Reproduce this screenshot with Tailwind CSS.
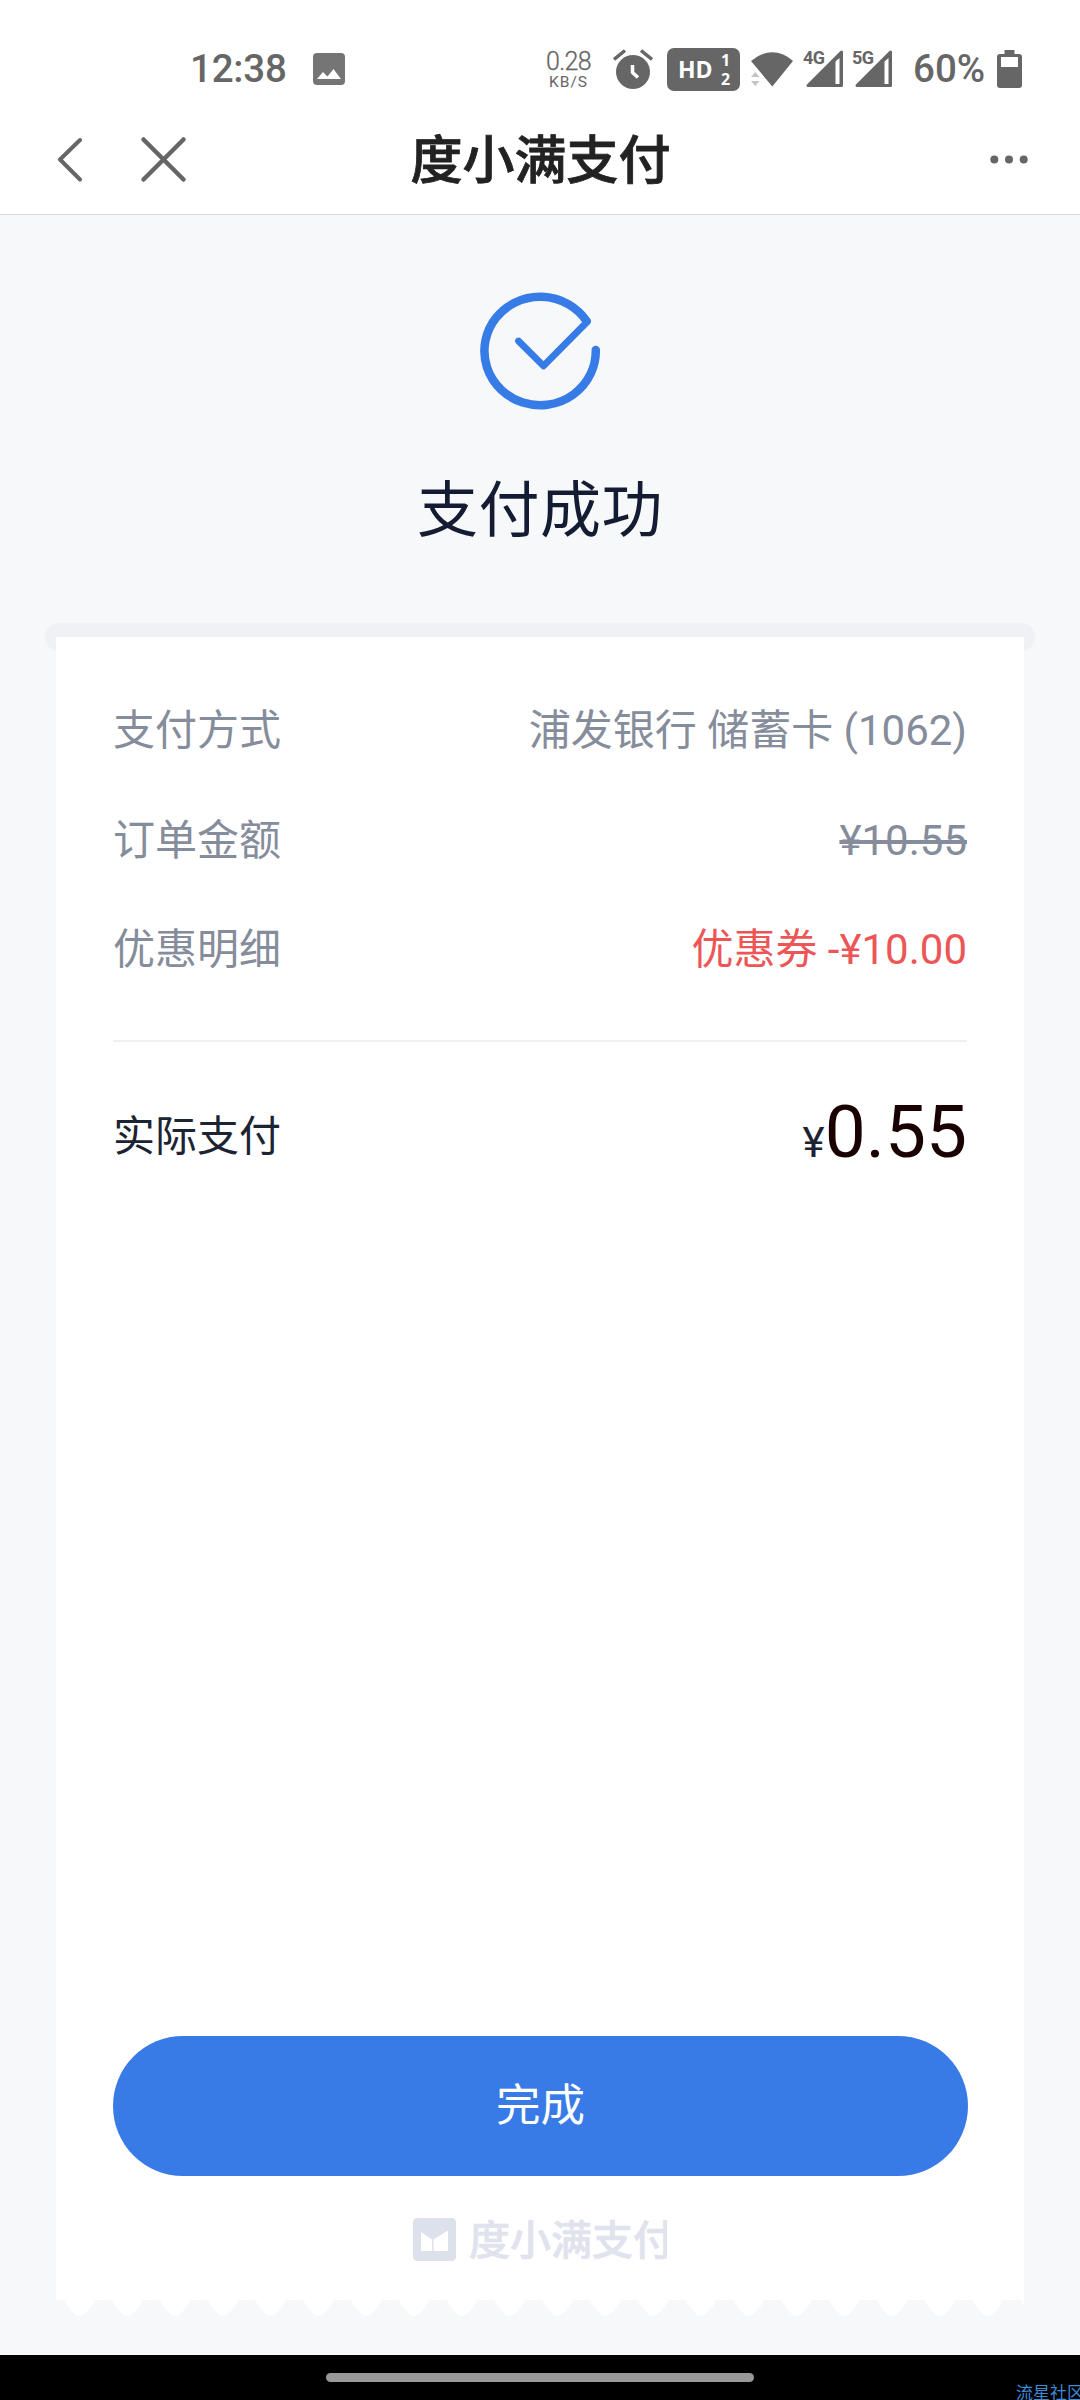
<!DOCTYPE html>
<html lang="zh-CN">
<head>
<meta charset="utf-8">
<meta name="viewport" content="width=1080">
<title>度小满支付</title>
<script src="https://cdn.jsdelivr.net/npm/@tailwindcss/browser@4"></script>
</head>
<body class="w-[1080px] h-[2400px] overflow-hidden flex flex-col bg-[#f6f8fa] font-[Roboto,'Noto_Sans_CJK_SC',sans-serif]">

<header class="h-[215px] shrink-0 flex flex-col bg-white border-b border-[#d9dadb] text-[#666666]">
  <!-- Status bar -->
  <div class="h-[110px] pt-[30px] flex items-start">
    <div class="ml-[190px] w-[123px] h-20 pt-[16px] text-[38.500px] leading-[46px] font-medium tracking-[-0.2px] whitespace-nowrap">12:38</div>
    <svg class="w-8 h-8 mt-[23px]" viewBox="0 0 32 32"><rect width="32" height="32" rx="4" fill="#757575"/><path d="M4 26 10 19 14.5 23.500 20.500 16 28 26z" fill="#fff"/></svg>
    <div class="ml-[197px] w-[53px] flex flex-col items-center pt-[19px] font-light">
      <span class="text-[25px] leading-[26px] tracking-[-0.6px] whitespace-nowrap [-webkit-text-stroke:0.3px_#666]">0.28</span>
      <span class="text-[15.500px] leading-[14px] tracking-[1px] font-normal whitespace-nowrap">KB/S</span>
    </div>
    <svg class="ml-[18px] w-10 h-11 mt-[18px]" viewBox="613 48 40 44"><circle cx="633" cy="72" r="17" fill="#666"/><path d="M614 59.500 625 50.500M641 50.500 652 59.500" stroke="#666" stroke-width="3.500" fill="none"/><path d="M632.500 65v7.500l5.500 5" stroke="#fff" stroke-width="3.500" fill="none"/></svg>
    <div class="ml-[14px] mt-[18px] w-[73px] h-[43px] rounded-[7px] bg-[#666] text-white flex items-center font-['Open_Sans']">
      <span class="ml-[11px] w-[37px] text-[23px] leading-[43px] font-bold">HD</span>
      <span class="ml-[6px] flex flex-col text-[16px] leading-[19px] font-bold"><span>1</span><span>2</span></span>
    </div>
    <svg class="ml-[10px] w-[54px] h-10 mt-[20px]" viewBox="750 50 54 40"><path d="M751 61Q761 52.300 772.300 52.300T793 61L772.300 86.500z" fill="#666"/><path d="M751 77 755.300 72 759.500 77zM751 81H759.500L755.300 86z" fill="#c4c4c4"/></svg>
    <div class="relative w-[45px] h-[45px] mt-[18px]">
      <svg class="absolute left-0 top-0 w-[45px] h-[45px]" viewBox="804 48 45 45"><path d="M808 85.500 841.500 52v33.500z" fill="#666" stroke="#666" stroke-width="3" stroke-linejoin="round"/><path d="M835.500 61.500 839.500 58V84H835.500z" fill="#fff"/></svg>
      <span class="absolute left-[-1px] top-0 text-[18px] leading-5 font-bold tracking-[-0.5px]">4G</span>
    </div>
    <div class="relative ml-1 w-[45px] h-[45px] mt-[18px]">
      <svg class="absolute left-0 top-0 w-[45px] h-[45px]" viewBox="804 48 45 45"><path d="M808 85.500 841.500 52v33.500z" fill="#666" stroke="#666" stroke-width="3" stroke-linejoin="round"/><path d="M835.500 61.500 839.500 58V84H835.500z" fill="#fff"/></svg>
      <span class="absolute left-[-1px] top-0 text-[18px] leading-5 font-bold tracking-[-0.5px]">5G</span>
    </div>
    <div class="ml-[15px] w-[84px] pt-[16px] text-[38.500px] leading-[46px] whitespace-nowrap font-medium">60%</div>
    <svg class="w-[25px] h-[38px] mt-[20px]" viewBox="997 50 25 38"><path fill-rule="evenodd" d="M1004.500 50h10v4h4.500q3 0 3 3v28q0 3-3 3h-19q-3 0-3-3V57q0-3 3-3h4.500zM1001 57v10h17V57z" fill="#666"/></svg>
  </div>
  <!-- Title bar -->
  <div class="h-[104px] flex items-start">
    <svg class="ml-[50px] w-[140px] h-[60px] mt-5" viewBox="50 130 140 60" fill="none" stroke="#666" stroke-linecap="round" stroke-linejoin="round"><path d="M80 140 60 159.500 80 179.500" stroke-width="4"/><path d="M143.500 139.500 183.500 179.500M183.500 139.500 143.500 179.500" stroke-width="4.500"/></svg>
    <h1 class="flex-1 pl-[1px] text-center text-[52px] leading-[76px] mt-[14px] font-medium text-[#222] [-webkit-text-stroke:0.8px_#222]">度小满支付</h1>
    <svg class="w-[140px] mr-[50px] h-5 mt-10" viewBox="890 150 140 20" fill="#666"><circle cx="994.300" cy="159.500" r="4"/><circle cx="1009" cy="159.500" r="4"/><circle cx="1023.700" cy="159.500" r="4"/></svg>
  </div>
</header>

<main class="flex-1 flex flex-col items-center">
  <svg class="mt-[75px] w-[124px] h-[121px] shrink-0" viewBox="478 290 124 121" fill="none" stroke="#377ce6" stroke-linecap="round" stroke-linejoin="round"><path d="M595.800 350A55.700 54.200 0 1 1 586.500 321" stroke-width="8.500"/><path d="M518.500 341 543.500 365.800 587.500 321.500" stroke-width="6.800"/></svg>
  <h2 class="mt-[56px] h-[88px] text-[61px] leading-[88px] tracking-[0.5px] text-[#131c33]">支付成功</h2>

  <!-- Receipt slot and the slip coming out of it -->
  <div class="mt-[68px] w-[990px] h-7 shrink-0 rounded-full bg-[#eff1f4]"></div>
  <section class="-mt-[14px] w-[968px] h-[1663px] shrink-0 relative bg-white px-[57px] flex flex-col text-[42px] leading-[60px] text-[#858c9b]">
    <div class="mt-[64px] flex flex-col gap-[49.500px]">
      <div class="flex justify-between"><span>支付方式</span><span>浦发银行 储蓄卡 (1062)</span></div>
      <div class="flex justify-between"><span>订单金额</span><span class="line-through decoration-[3.500px]">¥10.55</span></div>
      <div class="flex justify-between"><span>优惠明细</span><span class="text-[#ec5656]">优惠券 -¥10.00</span></div>
    </div>
    <div class="mt-[60px] h-[2px] shrink-0 bg-[#eff0f3]"></div>
    <div class="mt-[44px] h-[100px] flex items-center justify-between text-[#1c2433]">
      <span class="pt-[1px]">实际支付</span>
      <span class="flex items-baseline leading-[100px] pt-[2px]"><span>¥</span><span class="text-[73px] text-[#1a0202]">0.55</span></span>
    </div>
    <button class="mt-auto -mr-px h-[140px] shrink-0 rounded-full bg-[#397be6] text-white text-[44.500px] leading-[141px]">完成</button>
    <div class="mt-[34px] mb-[32px] h-[58px] shrink-0 ml-[300px] flex items-center text-[#e0e3ed]">
      <svg class="w-[43px] h-[43px]" viewBox="0 0 43 43"><rect width="43" height="43" rx="4.500" fill="#dde1ec"/><path d="M8 14 19 21.500V33H8zM20.500 21.500 35 12.500V33H20.500z" fill="#fff"/></svg>
      <span class="ml-[13px] w-[198px] overflow-hidden whitespace-nowrap text-[41px] leading-[58px] pt-[4px] font-medium [-webkit-text-stroke:0.6px_#e0e3ed]">度小满支付</span>
    </div>
  </section>
  <!-- Torn lower edge -->
  <svg class="w-[968px] h-[17px] shrink-0" viewBox="0 0 968 17"><defs><pattern id="teeth" x="-0.400" width="47.800" height="17" patternUnits="userSpaceOnUse"><path d="M8.400 0Q12 7 19 14Q23.900 18 28.800 14Q36 7 39.400 0z" fill="#fff"/></pattern></defs><rect width="956" height="17" fill="url(#teeth)"/><path d="M965 0h3v7z" fill="#fff"/></svg>
</main>

<!-- Gesture bar -->
<footer class="relative h-[45px] shrink-0 bg-black flex justify-center">
  <div class="mt-[18px] w-[428px] h-[9px] rounded-full bg-[#999]"></div>
  <span class="absolute left-[1016px] top-[28px] text-[17px] leading-5 text-[#3f8bd3] whitespace-nowrap">流星社区</span>
</footer>
</body>
</html>
